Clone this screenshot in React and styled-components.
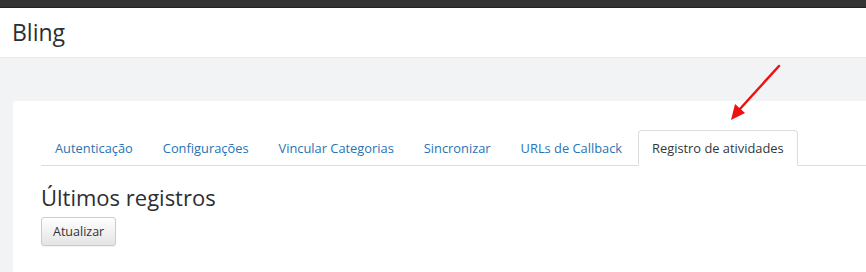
import React from "react";
import styled, { createGlobalStyle } from "styled-components";

const Global = createGlobalStyle`
  html, body { margin: 0; padding: 0; background: #f2f3f5; }
  body { font-family: "Open Sans", "Liberation Sans", sans-serif; color: #32373c; overflow: hidden; }
  * { box-sizing: border-box; }
`;

const Page = styled.div`
  width: 866px;
  height: 272px;
  display: flex;
  flex-direction: column;
  background: #f2f3f5;
  overflow: hidden;
`;

const TopBar = styled.div`
  height: 8px;
  background: #333;
  border-bottom: 1px solid #222;
  flex: none;
`;

const Header = styled.header`
  height: 50px;
  background: #fff;
  display: flex;
  align-items: center;
  padding: 0 0 2px 12px;
  border-bottom: 1px solid #e8e9eb;
  flex: none;
`;

const Title = styled.h1`
  margin: 0;
  font-size: 23px;
  font-weight: 400;
  color: #2c2f33;
`;

const Main = styled.main`
  flex: 1;
  padding: 43px 0 0 13px;
  position: relative;
`;

const Card = styled.section`
  background: #fff;
  border-radius: 3px 0 0 0;
  height: 100%;
  padding: 29px 0 0 28px;
`;

const Tabs = styled.ul`
  list-style: none;
  margin: 0;
  padding: 0;
  display: flex;
  border-bottom: 1px solid #ddd;
  height: 36px;
`;

const Tab = styled.li`
  margin: 0 2px -1px 0;
  padding: 0 13px;
  height: 36px;
  display: flex;
  align-items: center;
  font-size: 12.85px;
  border: 1px solid ${(p) => (p.$active ? "#ddd" : "transparent")};
  border-bottom-color: ${(p) => (p.$active ? "#fff" : "transparent")};
  border-radius: 4px 4px 0 0;
  background: ${(p) => (p.$active ? "#fff" : "transparent")};
  color: ${(p) => (p.$active ? "#32373c" : "#2a73b3")};
  white-space: nowrap;
`;

const Heading = styled.h2`
  margin: 16px 0 0 0;
  font-size: 22px;
  font-weight: 400;
  line-height: 30px;
  color: #2c2f33;
`;

const Button = styled.button`
  margin-top: 5px;
  height: 29px;
  padding: 0 11px;
  font-family: inherit;
  font-size: 12.5px;
  color: #333;
  border: 1px solid #ccc;
  border-radius: 3px;
  background: linear-gradient(#fff, #e4e4e4);
  box-shadow: 0 1px 1px rgba(0,0,0,0.06);
`;

const Arrow = styled.svg`
  position: absolute;
  left: 725px;
  top: 2px;
  width: 60px;
  height: 64px;
  overflow: visible;
`;

const tabs = [
  "Autenticação",
  "Configurações",
  "Vincular Categorias",
  "Sincronizar",
  "URLs de Callback",
  "Registro de atividades",
];

export default function App() {
  return (
    <Page>
      <Global />
      <TopBar />
      <Header>
        <Title>Bling</Title>
      </Header>
      <Main>
        <Card>
          <Tabs>
            {tabs.map((t, i) => (
              <Tab key={t} $active={i === tabs.length - 1}>{t}</Tab>
            ))}
          </Tabs>
          <Heading>Últimos registros</Heading>
          <Button>Atualizar</Button>
        </Card>
        <Arrow viewBox="0 0 60 64">
          <line x1="54" y1="6" x2="14" y2="50" stroke="#ee1111" strokeWidth="2.5" strokeLinecap="round" />
          <polygon points="6,60 10,44 20,53" fill="#ee1111" />
        </Arrow>
      </Main>
    </Page>
  );
}
